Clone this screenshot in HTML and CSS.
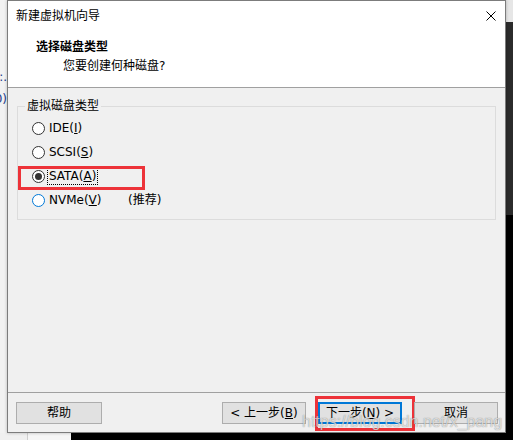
FILE: index.html
```html
<!DOCTYPE html>
<html lang="zh-CN">
<head>
<meta charset="utf-8">
<title>新建虚拟机向导</title>
<link rel="stylesheet" href="styles.css">
</head>
<body>
<div class="desktop">
  <div class="left-strip">
    <div class="clip-line l1"><span>D:\ntE:.</span></div>
    <div class="clip-line l2"><span>(20)</span></div>
  </div>
  <div class="dialog">
    <div class="titlebar">
      <span class="title">新建虚拟机向导</span>
      <svg class="close" width="10" height="10" viewBox="0 0 10 10"><path d="M0.5 0.5 L9.5 9.5 M9.5 0.5 L0.5 9.5" stroke="#000" stroke-width="1" fill="none"/></svg>
    </div>
    <div class="header">
      <div class="h-title">选择磁盘类型</div>
      <div class="h-sub">您要创建何种磁盘?</div>
    </div>
    <div class="body">
      <fieldset class="group">
        <legend>虚拟磁盘类型</legend>
        <div class="options">
          <div class="opt"><span class="radio"></span><span class="lbl">IDE(<u>I</u>)</span></div>
          <div class="opt"><span class="radio"></span><span class="lbl">SCSI(<u>S</u>)</span></div>
          <div class="opt"><span class="radio checked"></span><span class="lbl focus">SATA(<u>A</u>)</span><span class="mark mark-sata"></span></div>
          <div class="opt"><span class="radio hover"></span><span class="lbl wide">NVMe(<u>V</u>)</span><span class="rec">(推荐)</span></div>
        </div>
      </fieldset>
    </div>
    <div class="footer">
      <button class="btn btn-help">帮助</button>
      <div class="spacer"></div>
      <button class="btn">&lt; 上一步(<u>B</u>)</button>
      <button class="btn default">下一步(<u>N</u>) &gt;<span class="mark mark-next"></span></button>
      <button class="btn">取消</button>
      <span class="watermark">https://blog.csdn.net/x_pang</span>
    </div>
  </div>
  <div class="right-strip"></div>
  <div class="bottom-strip">
    <div class="bs-a"></div>
    <div class="bs-b"></div>
  </div>
</div>
</body>
</html>
```

FILE: styles.css
```css
* { box-sizing: border-box; }
html, body { margin: 0; padding: 0; }
body {
  width: 513px;
  height: 440px;
  overflow: hidden;
  background: #000;
  font-family: "DejaVu Sans", "Noto Sans CJK SC", sans-serif;
  font-size: 12px;
  color: #000;
}
.desktop {
  display: grid;
  grid-template-columns: 7px 499px 7px;
  grid-template-rows: 433px 7px;
  width: 513px;
  height: 440px;
}
.left-strip {
  grid-column: 1;
  grid-row: 1;
  background: #f2f2f2;
  overflow: hidden;
  padding-top: 70px;
}
.clip-line {
  display: flex;
  justify-content: flex-end;
  overflow: hidden;
  white-space: nowrap;
  height: 14px;
  line-height: 14px;
  color: #1a3a8a;
  font-size: 12px;
}
.clip-line.l2 { margin-top: 8px; }
.dialog {
  grid-column: 2;
  grid-row: 1;
  border: 1px solid #7c7c7c;
  background: #f0f0f0;
  display: flex;
  flex-direction: column;
  position: relative;
  box-shadow: 0 0 3px rgba(0,0,0,0.25);
}
.titlebar {
  height: 29px;
  background: #fff;
  display: flex;
  align-items: center;
  justify-content: space-between;
  padding: 0 9px 0 8px;
}
.title { line-height: 16px; }
.close { display: block; }
.header {
  height: 58px;
  background: #fff;
  border-bottom: 1px solid #a0a0a0;
  padding: 9px 0 0 28px;
}
.h-title {
  font-weight: bold;
  line-height: 16px;
}
.h-sub {
  line-height: 16px;
  margin-top: 3px;
  padding-left: 27px;
}
.body {
  flex: 1;
  padding: 10px 9px 0 9px;
}
.group {
  margin: 0;
  border: 1px solid #dcdcdc;
  padding: 2px 0 7px 7px;
}
.group legend {
  padding: 0 2px;
  line-height: 16px;
}
.options { padding-left: 7px; }
.opt {
  height: 24px;
  display: flex;
  align-items: center;
  position: relative;
}
.radio {
  width: 13px;
  height: 13px;
  border: 1px solid #333;
  border-radius: 50%;
  background: #fff;
  margin-right: 3px;
  display: flex;
  align-items: center;
  justify-content: center;
}
.radio.checked::after {
  content: "";
  width: 7px;
  height: 7px;
  border-radius: 50%;
  background: #333;
}
.radio.hover { border-color: #0078d7; }
.lbl { line-height: 15px; padding: 0 1px; }
.lbl.focus { outline: 1px dotted #000; }
.lbl.wide { display: inline-block; width: 80px; }
.rec { line-height: 15px; }
.mark {
  position: absolute;
  border: 3px solid #ed3339;
  pointer-events: none;
}
.mark-sata {
  left: -14px;
  top: 2px;
  width: 127px;
  height: 24px;
}
.footer {
  height: 40px;
  border-top: 1px solid #a0a0a0;
  display: flex;
  align-items: flex-start;
  padding: 9px 7px 0 8px;
  gap: 12px;
  position: relative;
}
.spacer { flex: 1; }
.btn {
  width: 84px;
  height: 22px;
  background: #e1e1e1;
  border: 1px solid #adadad;
  font-family: inherit;
  font-size: 12px;
  line-height: 16px;
  color: #000;
  padding: 0;
  position: relative;
}
.btn-help { width: 86px; }
.btn.default { border: 2px solid #0078d7; }
.mark-next {
  left: -5px;
  top: -8px;
  width: 100px;
  height: 35px;
}
.watermark {
  position: absolute;
  z-index: 2;
  left: 294px;
  top: 19px;
  font-family: "Liberation Sans", sans-serif;
  font-size: 16px;
  line-height: 19px;
  color: rgba(255,255,255,0.7);
  text-shadow: 0 0 1px rgba(0,0,0,0.5);
  white-space: nowrap;
  pointer-events: none;
}
.right-strip {
  grid-column: 3;
  grid-row: 1;
  background: linear-gradient(to bottom, #e6e6e6 0, #e6e6e6 22px, #2b2b2b 22px, #2b2b2b 215px, #000 215px);
}
.bottom-strip {
  grid-column: 1 / 4;
  grid-row: 2;
  display: flex;
}
.bs-a {
  width: 28px;
  background: #f0f0f0;
  border-right: 1px solid #cfcfcf;
}
.bs-b {
  width: 43px;
  background: #f6f6f6;
}
```
